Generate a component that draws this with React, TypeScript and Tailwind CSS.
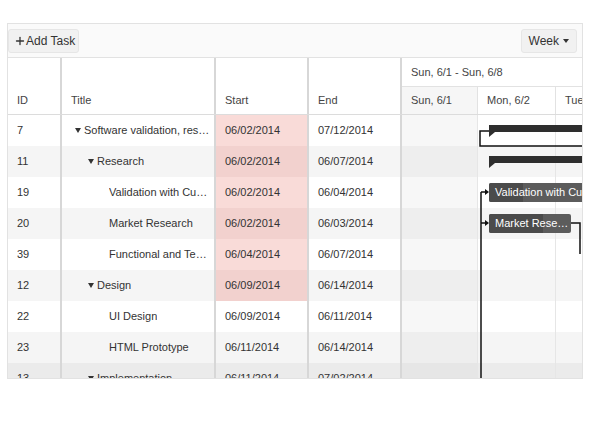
import { Plus } from "lucide-react";

interface Task {
  id: number;
  title: string;
  level: number;
  parent: boolean;
  start: string;
  end: string;
  late: boolean;
}

const tasks: Task[] = [
  { id: 7, title: "Software validation, research and implementation", level: 0, parent: true, start: "06/02/2014", end: "07/12/2014", late: true },
  { id: 11, title: "Research", level: 1, parent: true, start: "06/02/2014", end: "06/07/2014", late: true },
  { id: 19, title: "Validation with Customers", level: 2, parent: false, start: "06/02/2014", end: "06/04/2014", late: true },
  { id: 20, title: "Market Research", level: 2, parent: false, start: "06/02/2014", end: "06/03/2014", late: true },
  { id: 39, title: "Functional and Technical Specification", level: 2, parent: false, start: "06/04/2014", end: "06/07/2014", late: true },
  { id: 12, title: "Design", level: 1, parent: true, start: "06/09/2014", end: "06/14/2014", late: true },
  { id: 22, title: "UI Design", level: 2, parent: false, start: "06/09/2014", end: "06/11/2014", late: false },
  { id: 23, title: "HTML Prototype", level: 2, parent: false, start: "06/11/2014", end: "06/14/2014", late: false },
  { id: 13, title: "Implementation", level: 1, parent: true, start: "06/11/2014", end: "07/02/2014", late: false },
];

const indent = ["w-[3px]", "w-[16px]", "w-[28px]"];

// row shade: even rows white, odd rows grey, the last (hovered) row a bit darker
const rowBg = (i: number) =>
  i === 8 ? "bg-[#ebebeb]" : i % 2 === 1 ? "bg-[#f5f5f5]" : "bg-white";
const lateBg = (i: number) => (i % 2 === 1 ? "bg-[#f2d1ce]" : "bg-[#f9dbd8]");
const weekendBg = (i: number) =>
  i === 8 ? "bg-[#e6e6e6]" : i % 2 === 1 ? "bg-[#eeeeee]" : "bg-[#f7f7f7]";

const Caret = () => (
  <span className="h-0 w-0 border-x-[3px] border-t-[5px] border-x-transparent border-t-[#333]" />
);

const App = () => {
  return (
    <div className="min-h-screen bg-white pl-[7px] pt-[23px] font-['Liberation_Sans',Arial,sans-serif] text-[11px] text-[#333]">
      <div className="flex h-[356px] w-[576px] flex-col overflow-hidden border border-[#e2e2e2]">
        {/* Toolbar */}
        <div className="flex h-[34px] shrink-0 items-center justify-between border-b border-[#e2e2e2] bg-[#fafafa] pr-[5px]">
          <button className="flex h-[24px] items-center rounded-[3px] border border-[#e6e6e6] bg-[#f1f1f1] pl-[5px] pr-[3px] text-[12px] text-[#333]">
            <Plus className="h-[12px] w-[12px]" strokeWidth={2.6} />
            Add Task
          </button>
          <button className="flex h-[24px] items-center gap-[4px] rounded-[3px] border border-[#e6e6e6] bg-[#f1f1f1] px-[7px] text-[12px] text-[#333]">
            Week
            <span className="h-0 w-0 border-x-[3px] border-t-[4px] border-x-transparent border-t-[#333]" />
          </button>
        </div>

        {/* Header */}
        <div className="flex h-[57px] shrink-0 border-b border-[#dcdcdc] bg-white text-[#444]">
          <div className="flex w-[54px] shrink-0 items-end border-r-2 border-[#d7d7d7] pb-[6px] pl-[9px]">ID</div>
          <div className="flex w-[154px] shrink-0 items-end border-r-2 border-[#d7d7d7] pb-[6px] pl-[9px]">Title</div>
          <div className="flex w-[93px] shrink-0 items-end border-r-2 border-[#d7d7d7] pb-[6px] pl-[9px]">Start</div>
          <div className="flex w-[93px] shrink-0 items-end border-r-2 border-[#d7d7d7] pb-[6px] pl-[9px]">End</div>
          <div className="flex flex-1 flex-col overflow-hidden">
            <div className="flex h-[29px] shrink-0 items-center whitespace-nowrap border-b border-[#e2e2e2] pl-[9px]">
              Sun, 6/1 - Sun, 6/8
            </div>
            <div className="flex flex-1">
              <div className="flex w-[76px] shrink-0 items-center border-r border-[#e2e2e2] bg-[#f6f6f6] pl-[9px]">Sun, 6/1</div>
              <div className="flex w-[78px] shrink-0 items-center border-r border-[#e2e2e2] pl-[9px]">Mon, 6/2</div>
              <div className="flex w-[78px] shrink-0 items-center whitespace-nowrap pl-[9px]">Tue, 6/3</div>
            </div>
          </div>
        </div>

        {/* Body */}
        <div className="flex flex-1 overflow-hidden">
          <div className="flex shrink-0 flex-col">
            {tasks.map((t, i) => (
              <div key={t.id} className={`flex h-[31px] shrink-0 ${rowBg(i)}`}>
                <div className="flex w-[54px] shrink-0 items-center border-r-2 border-[#d7d7d7] pl-[9px]">{t.id}</div>
                <div className="flex w-[154px] shrink-0 items-center border-r-2 border-[#d7d7d7] pl-[10px] pr-[3px]">
                  <span className={`shrink-0 ${indent[t.level]}`} />
                  <span className="flex w-[9px] shrink-0 items-center">{t.parent && <Caret />}</span>
                  <span className="min-w-0 truncate">{t.title}</span>
                </div>
                <div className={`flex w-[93px] shrink-0 items-center border-r-2 border-[#d7d7d7] pl-[9px] ${t.late ? lateBg(i) : ""}`}>
                  {t.start}
                </div>
                <div className="flex w-[93px] shrink-0 items-center border-r-2 border-[#d7d7d7] pl-[9px]">{t.end}</div>
              </div>
            ))}
          </div>

          {/* Timeline */}
          <div className="relative flex-1 overflow-hidden">
            {tasks.map((t, i) => (
              <div key={t.id} className={`flex h-[31px] ${rowBg(i)}`}>
                <div className={`w-[76px] shrink-0 border-r border-[#e6e6e6] ${weekendBg(i)}`} />
                <div className="w-[78px] shrink-0 border-r border-[#e6e6e6]" />
                <div className="w-[78px] shrink-0" />
              </div>
            ))}

            <svg className="absolute left-0 top-0" width="200" height="270" viewBox="0 0 200 270">
              {/* summary bars */}
              <rect x="87" y="10" width="113" height="7" fill="#2e2e2e" />
              <polygon points="87,17 93,17 87,22" fill="#2e2e2e" />
              <rect x="87" y="41" width="113" height="7" fill="#2e2e2e" />
              <polygon points="87,48 93,48 87,53" fill="#2e2e2e" />
              {/* dependency lines */}
              <polyline points="87,16 78,16 78,31 200,31" fill="none" stroke="#111" strokeWidth="1.5" />
              <line x1="79" y1="77" x2="79" y2="270" stroke="#111" strokeWidth="1.5" />
              <line x1="79" y1="77" x2="84" y2="77" stroke="#111" strokeWidth="1.5" />
              <polygon points="83,74 87,77 83,80" fill="#111" />
              <line x1="79" y1="108" x2="84" y2="108" stroke="#111" strokeWidth="1.5" />
              <polygon points="83,105 87,108 83,111" fill="#111" />
              <polyline points="169,108 178,108 178,139" fill="none" stroke="#111" strokeWidth="1.5" />
            </svg>

            <div className="absolute left-[87px] top-[68px] h-[19px] w-[200px] overflow-hidden rounded-[2px] bg-[#5c5c5c]">
              <div className="absolute inset-y-0 left-0 w-[34px] bg-[#4b4b4b]" />
              <span className="relative block whitespace-nowrap pl-[6px] leading-[19px] text-white">Validation with Customers</span>
            </div>
            <div className="absolute left-[87px] top-[99px] h-[19px] w-[82px] overflow-hidden rounded-[2px] bg-[#5c5c5c]">
              <div className="absolute inset-y-0 left-0 w-[54px] bg-[#4b4b4b]" />
              <span className="relative block truncate pl-[6px] pr-[1px] leading-[19px] text-white">Market Research</span>
            </div>
          </div>
        </div>
      </div>
    </div>
  );
};

export default App;
